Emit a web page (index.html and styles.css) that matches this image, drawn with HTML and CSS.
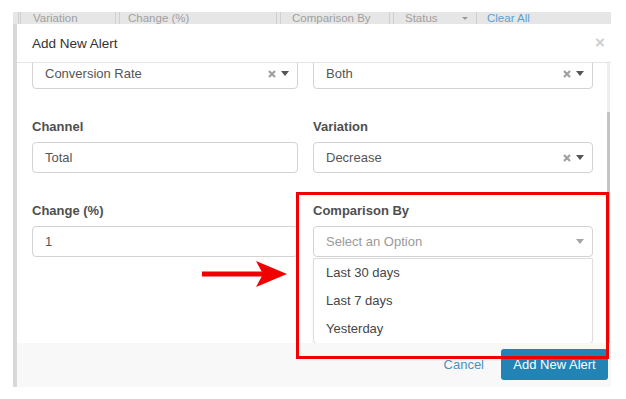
FILE: index.html
```html
<!DOCTYPE html>
<html>

<head>
    <title>Add New Alert</title>
    <meta charset="utf-8">
    <link rel="stylesheet" href="styles.css">
</head>

<body>
    <div class="screen">
        <div class="filters">
            <span class="cell edge"></span>
            <span class="cell f-var">Variation</span>
            <span class="cell f-change">Change (%)</span>
            <span class="cell f-comp">Comparison By</span>
            <span class="cell f-status">Status <i class="mini-caret"></i></span>
            <a class="clear-all">Clear All</a>
        </div>

        <div class="modal">
            <div class="modal-header">
                <span class="title">Add New Alert</span>
                <span class="close">&times;</span>
            </div>

            <div class="modal-body">
                <div class="scroll">
                    <div class="form">
                        <!-- first row is scrolled under the header, labels out of view -->
                        <div class="group">
                            <div class="select">
                                <span class="value">Conversion Rate</span>
                                <svg class="clear" width="8" height="8" viewBox="0 0 8 8"><path d="M1 1L7 7M7 1L1 7" /></svg>
                                <svg class="caret" width="8" height="5" viewBox="0 0 8 5"><path d="M0 0H8L4 5Z" /></svg>
                            </div>
                        </div>
                        <div class="group">
                            <div class="select">
                                <span class="value">Both</span>
                                <svg class="clear" width="8" height="8" viewBox="0 0 8 8"><path d="M1 1L7 7M7 1L1 7" /></svg>
                                <svg class="caret" width="8" height="5" viewBox="0 0 8 5"><path d="M0 0H8L4 5Z" /></svg>
                            </div>
                        </div>

                        <div class="group">
                            <label>Channel</label>
                            <div class="input">Total</div>
                        </div>
                        <div class="group">
                            <label>Variation</label>
                            <div class="select">
                                <span class="value">Decrease</span>
                                <svg class="clear" width="8" height="8" viewBox="0 0 8 8"><path d="M1 1L7 7M7 1L1 7" /></svg>
                                <svg class="caret" width="8" height="5" viewBox="0 0 8 5"><path d="M0 0H8L4 5Z" /></svg>
                            </div>
                        </div>

                        <div class="group">
                            <label>Change (%)</label>
                            <div class="input">1</div>
                        </div>
                        <div class="group">
                            <label>Comparison By</label>
                            <div class="select open">
                                <span class="value placeholder">Select an Option</span>
                                <svg class="caret light" width="8" height="5" viewBox="0 0 8 5"><path d="M0 0H8L4 5Z" /></svg>
                                <ul class="options">
                                    <li>Last 30 days</li>
                                    <li>Last 7 days</li>
                                    <li>Yesterday</li>
                                </ul>
                            </div>
                        </div>
                    </div>
                </div>
                <div class="scrollbar"><div class="thumb"></div></div>
            </div>

            <div class="modal-footer">
                <a class="cancel">Cancel</a>
                <button class="btn-add">Add New Alert</button>
            </div>
        </div>
    </div>

    <!-- annotation -->
    <div class="highlight"></div>
    <svg class="arrow" width="90" height="30" viewBox="0 0 90 30">
        <path d="M2 14H64" stroke="#f20000" stroke-width="5" />
        <path d="M56 1L87 14L56 27L63 14Z" fill="#f20000" />
    </svg>
</body>

</html>
```

FILE: styles.css
```css
body {
    margin: 0;
    background: #fff;
    font-family: "Liberation Sans", Arial, sans-serif;
    font-size: 13px;
    color: #555;
}

.screen {
    margin: 12px 0 0 13px;
    width: 598px;
    background: #d8d8d8;
}

.filters {
    height: 12px;
    background: #e6e6e6;
    display: flex;
    font-size: 11.5px;
    line-height: 12px;
    color: #a0a0a0;
    white-space: nowrap;
}

.cell {
    height: 12px;
    border-left: 1px solid #cfcfcf;
    border-right: 1px solid #cfcfcf;
    box-sizing: border-box;
    margin-right: 3px;
}

.edge {
    width: 6px;
    border-left: none;
    margin-right: 1px;
}

.f-var {
    width: 96px;
    padding-left: 12px;
}

.f-change {
    width: 158px;
    padding-left: 8px;
}

.f-comp {
    width: 110px;
    padding-left: 11px;
}

.f-status {
    width: 84px;
    padding-left: 11px;
    position: relative;
}

.mini-caret {
    position: absolute;
    right: 8px;
    top: 5px;
    border-left: 3px solid transparent;
    border-right: 3px solid transparent;
    border-top: 3px solid #999;
}

.clear-all {
    color: #5d9fd0;
    padding-left: 7px;
}

.modal {
    margin-left: 4px;
    width: 594px;
    background: #fff;
}

.modal-header {
    height: 38px;
    border-bottom: 1px solid #e5e5e5;
    display: flex;
    align-items: center;
    justify-content: space-between;
    padding: 0 6px 0 15px;
}

.title {
    font-size: 13.5px;
    color: #333;
}

.close {
    font-size: 17px;
    font-weight: bold;
    color: #cdcdcd;
}

.modal-body {
    display: flex;
    height: 280px;
}

.scroll {
    flex: 1;
    overflow: hidden;
}

.scrollbar {
    width: 3px;
    margin-right: 1px;
    background: #eeeeee;
    padding-top: 49px;
}

.thumb {
    height: 100%;
    background: #c4c4c4;
}

.form {
    margin-top: -5px;
    padding-left: 15px;
    display: grid;
    grid-template-columns: 266px 280px;
    column-gap: 15px;
}

.group {
    margin-bottom: 29px;
}

.group label {
    display: block;
    line-height: 18px;
    margin-bottom: 6px;
    font-weight: bold;
    color: #4f4f4f;
}

.select,
.input {
    height: 31px;
    box-sizing: border-box;
    border: 1px solid #d3d3d3;
    border-radius: 4px;
    padding: 0 8px 0 12px;
    display: flex;
    align-items: center;
    color: #555;
}

.select {
    position: relative;
}

.value {
    flex: 1;
}

.placeholder {
    color: #9a9a9a;
}

.clear {
    stroke: #a0a0a0;
    stroke-width: 2.2;
    margin-right: 5px;
}

.caret {
    fill: #555;
}

.caret.light {
    fill: #a5a5a5;
}

.options {
    position: absolute;
    left: -1px;
    right: -1px;
    top: 31px;
    margin: 0;
    padding: 0;
    list-style: none;
    background: #fff;
    border: 1px solid #dedede;
    border-radius: 0 0 4px 4px;
    box-shadow: 0 2px 3px rgba(0, 0, 0, 0.06);
}

.options li {
    height: 28px;
    line-height: 27px;
    padding-left: 12px;
    color: #454545;
}

.modal-footer {
    height: 44px;
    background: #f8f8f8;
    display: flex;
    justify-content: flex-end;
    align-items: center;
    padding: 0 3px 2px 0;
    box-sizing: border-box;
}

.cancel {
    color: #4a90c2;
    margin-right: 17px;
}

.btn-add {
    width: 107px;
    height: 31px;
    border: none;
    border-radius: 3px;
    background: #2283b5;
    color: #fff;
    font-family: "Liberation Sans", Arial, sans-serif;
    font-size: 13px;
    padding: 0;
}

.highlight {
    position: absolute;
    left: 296px;
    top: 192px;
    width: 313px;
    height: 167px;
    box-sizing: border-box;
    border: 3px solid #f20000;
}

.arrow {
    position: absolute;
    left: 200px;
    top: 260px;
}
```
